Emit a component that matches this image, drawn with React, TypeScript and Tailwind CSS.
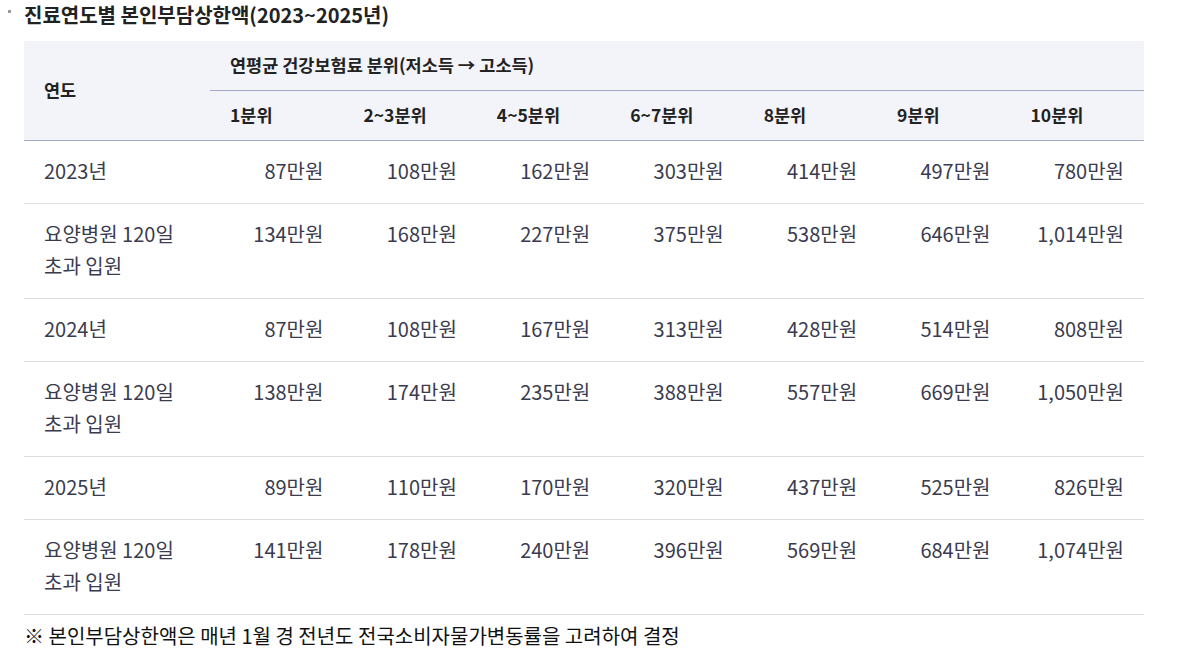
import React from 'react';

const cols = ['1분위', '2~3분위', '4~5분위', '6~7분위', '8분위', '9분위', '10분위'];

const rows = [
  { label: '2023년', values: ['87', '108', '162', '303', '414', '497', '780'] },
  { label: '요양병원 120일 초과 입원', values: ['134', '168', '227', '375', '538', '646', '1,014'] },
  { label: '2024년', values: ['87', '108', '167', '313', '428', '514', '808'] },
  { label: '요양병원 120일 초과 입원', values: ['138', '174', '235', '388', '557', '669', '1,050'] },
  { label: '2025년', values: ['89', '110', '170', '320', '437', '525', '826'] },
  { label: '요양병원 120일 초과 입원', values: ['141', '178', '240', '396', '569', '684', '1,074'] },
];

const App: React.FC = () => {
  return (
    <div className="bg-white w-[1187px] h-[658px] overflow-hidden text-[#222] font-['Noto_Sans_CJK_KR','Noto_Sans',sans-serif]">
      <div className="flex items-center pl-[24px] pt-[2px] h-[28px] relative">
        <span className="absolute left-[8px] top-[10px] w-[3px] h-[3px] bg-[#999]" />
        <h3 className="text-[20px] font-bold leading-[24px]">진료연도별 본인부담상한액(2023~2025년)</h3>
      </div>

      <div className="pl-[24px] pt-[13px] w-[1144px]">
        <table className="w-[1120px] border-collapse table-fixed">
          <colgroup>
            <col className="w-[186px]" />
            {cols.map((c) => (
              <col key={c} />
            ))}
          </colgroup>
          <thead className="bg-[#f3f4f9]">
            <tr className="h-[49px]">
              <th rowSpan={2} className="text-left pl-[20px] text-[17.5px] font-bold border-b border-[#a3a8c3]">
                연도
              </th>
              <th colSpan={7} className="text-left pl-[20px] text-[17.5px] font-bold border-b border-[#a3a8c3]">
                연평균 건강보험료 분위(저소득 → 고소득)
              </th>
            </tr>
            <tr className="h-[50px]">
              {cols.map((c) => (
                <th key={c} className="text-left pl-[20px] text-[17.5px] font-bold border-b border-[#a3a8c3]">
                  {c}
                </th>
              ))}
            </tr>
          </thead>
          <tbody className="text-[20px] text-[#3b3b4f]">
            {rows.map((r, i) => (
              <tr key={i} className="border-b border-[#dddddd] align-top">
                <td className="pl-[20px] pr-[10px] pt-[14px] pb-[16px] leading-[32px] break-keep">
                  {r.label}
                </td>
                {r.values.map((v, j) => (
                  <td key={j} className="text-right pr-[20px] pt-[14px] pb-[16px] leading-[32px]">
                    {v}만원
                  </td>
                ))}
              </tr>
            ))}
          </tbody>
        </table>
      </div>

      <p className="pl-[24px] pt-[8px] text-[20px] leading-[26px] text-[#111]">
        ※ 본인부담상한액은 매년 1월 경 전년도 전국소비자물가변동률을 고려하여 결정
      </p>
    </div>
  );
};

export default App;
